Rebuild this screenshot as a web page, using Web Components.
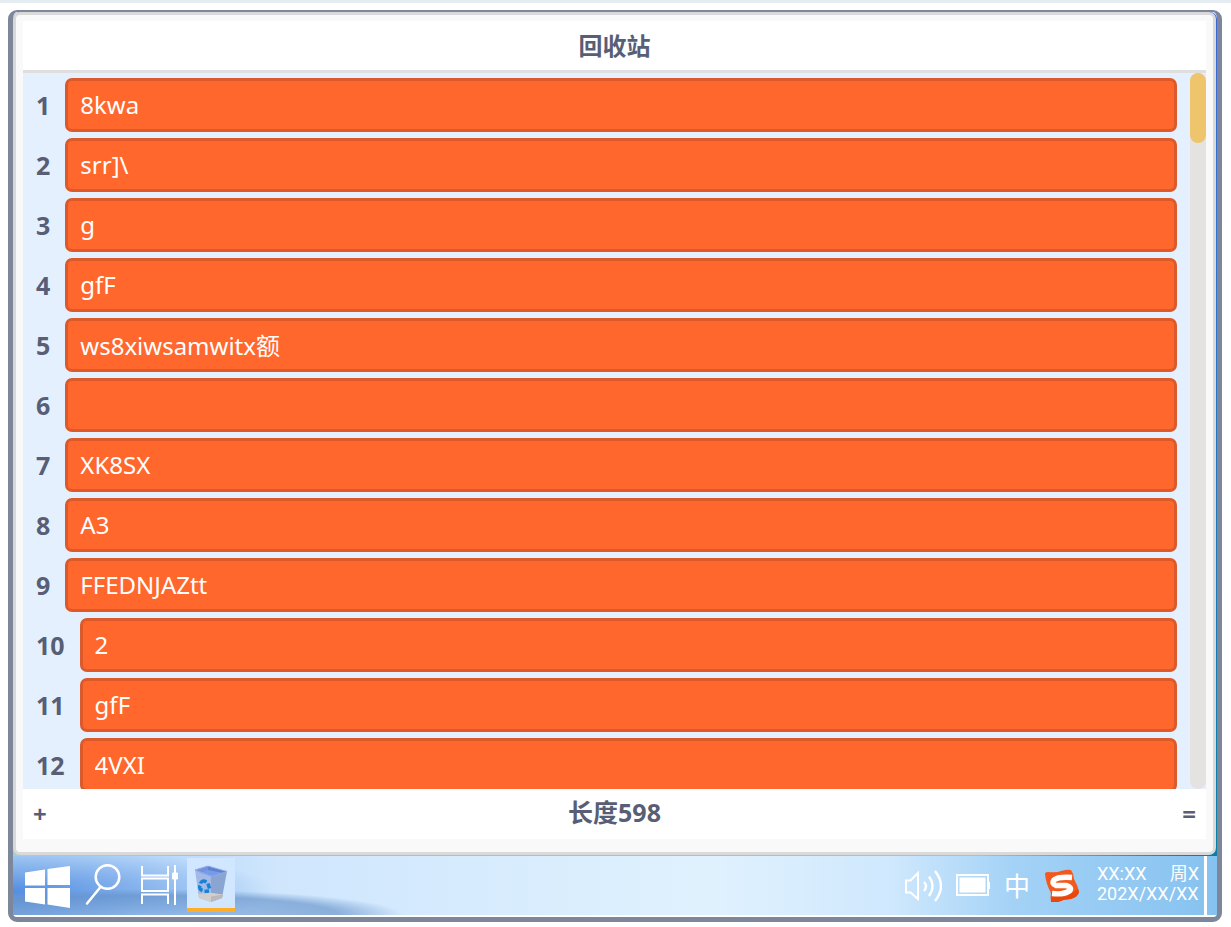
<!DOCTYPE html>
<html lang="zh-CN">
<head>
<meta charset="utf-8">
<meta name="viewport" content="width=device-width, initial-scale=1">
<title>回收站</title>
<style>
    html, body {
        height: 100%;
        margin: 0;
    }

    body {
        background: #fff;
        font-family: "Noto Sans", "Noto Sans CJK SC", sans-serif;
        overflow: hidden;
    }
</style>
</head>
<body>

<desk-stage>
    <list-monitor heading="回收站">
        <list-row index="1" value="8kwa"></list-row>
        <list-row index="2" value="srr]\"></list-row>
        <list-row index="3" value="g"></list-row>
        <list-row index="4" value="gfF"></list-row>
        <list-row index="5" value="ws8xiwsamwitx额"></list-row>
        <list-row index="6" value=""></list-row>
        <list-row index="7" value="XK8SX"></list-row>
        <list-row index="8" value="A3"></list-row>
        <list-row index="9" value="FFEDNJAZtt"></list-row>
        <list-row index="10" value="2"></list-row>
        <list-row index="11" value="gfF"></list-row>
        <list-row index="12" value="4VXI"></list-row>
        <span slot="length">长度598</span>
    </list-monitor>

    <task-bar slot="taskbar">
        <task-button label="开始">
            <svg width="45" height="42" viewBox="0 0 45 42" fill="#fff">
                <path d="M0 6.500L20 3.500V19.500H0zM22.500 3L45 0V19H22.500zM0 22H20V38.500L0 35.500zM22.500 22H45V42L22.500 38.500z"/>
            </svg>
        </task-button>
        <task-button label="搜索">
            <svg width="36" height="42" viewBox="0 2 36 42" overflow="visible" fill="none" stroke="#fff" stroke-width="2.500" stroke-linecap="round">
                <circle cx="22.500" cy="13" r="11.800"/>
                <path d="M15.500 23L2 39.500"/>
            </svg>
        </task-button>
        <task-button label="任务视图">
            <svg width="38" height="42" viewBox="0 2 38 42" overflow="visible" fill="none" stroke="#fff" stroke-width="2">
                <path d="M2 2V11.500H28V2M2 14.500H28V27H2zM2 40V30.500H28V40M35 1V41"/>
                <path d="M32.500 9h5v6h-5z" fill="#fff" stroke-width="1"/>
            </svg>
        </task-button>
        <task-button label="回收站" active>
            <svg width="34" height="38" viewBox="0 0 34 38">
                <path d="M1 5L17 10V37L5 33z" fill="#a3b9e6"/>
                <path d="M33 6.500L17 10V37L28 33z" fill="#8ba5d2"/>
                <path d="M4 29L15 27.500L29 29.500L28 33L17 37L5 33z" fill="#d0cfce"/>
                <path d="M17 31.500V37L28 33L29 29.500z" fill="#bbb9bb"/>
                <path d="M1 5L14 1L33 6.500L18 11.500z" fill="#5d82ce"/>
                <path d="M1 5L14 1V7L7 8z" fill="#7592dc"/>
                <path d="M14 5L29 8L18 11.500L7 8z" fill="#759bea"/>
                <path d="M1 5L14 1L33 6.500L18 11.500z" fill="none" stroke="#92ade9"/>
                <g fill="none" stroke="#1782d4" stroke-width="3.500">
                    <path d="M6.500 18.500Q8 14.500 12.500 17"/>
                    <path d="M14 18.500L15.500 23.500"/>
                    <path d="M6 20.500Q4.500 24 8.500 25.500"/>
                    <path d="M10.500 26.500L15 26"/>
                </g>
            </svg>
        </task-button>

        <svg slot="tray" width="38" height="34" viewBox="0 0 38 34" fill="none" stroke="#fff" stroke-width="2">
            <path d="M2 11.500H6.500L14 4V30L6.500 23.500H2z"/>
            <path d="M20 13Q24 17 20 22M25 7.500Q32 17 25 27M31 2Q43 17 31 32" stroke-width="2.400"/>
        </svg>
        <svg slot="tray" width="34" height="23" viewBox="0 0 34 23">
            <path d="M1 1H32V21H1z" fill="none" stroke="#fff" stroke-width="2"/>
            <path d="M3.500 3.500H29.500V18.500H3.500zM33 8h1.500v7H33z" fill="#fff"/>
        </svg>
        <span slot="tray">中</span>
        <svg slot="tray" width="36" height="34" viewBox="0 0 36 34">
            <path d="M1 5Q1 3 4 3Q13 4 17 2Q24 0 27 1Q30 5 30 10Q34 17 35 23Q34 28 27 30Q20 30 14 33L7 33Q6 28 7 24Q2 15 1 5z" fill="#f4581d"/>
            <path d="M7 24L22 28L34 20L35 23Q34 28 27 30Q20 30 14 33L7 33z" fill="#e9480b"/>
            <path d="M28 8.500Q14 7.500 10 11Q7 14.500 12 16.500L22 16.500Q28 18 26 21.500Q20 26 8 24.500" fill="none" stroke="#fff" stroke-width="5.500"/>
        </svg>
        <tray-clock slot="tray" time="XX:XX" day="周X" date="202X/XX/XX"></tray-clock>
    </task-bar>
</desk-stage>

<script>
class BaseElement extends HTMLElement {
    constructor() {
        super();
        this.root = this.attachShadow({mode: 'open'});
    }

    connectedCallback() {
        this.root.innerHTML = `
            <style>
                * { box-sizing: border-box; }
                ${this.css()}
            </style>
            ${this.render()}
        `;
    }

    /** Read an attribute, safe to put into markup. */
    attr(name) {
        const value = this.getAttribute(name) || '';
        return value.replace(/&/g, '&amp;').replace(/"/g, '&quot;').replace(/</g, '&lt;');
    }

    css() {
        return '';
    }

    render() {
        return '';
    }
}

/** Rounded stage with the desktop wallpaper, a window and the task bar. */
class DeskStage extends BaseElement {
    css() {
        return `
            :host {
                display: flex;
                flex-direction: column;
                box-sizing: border-box;
                height: 100vh;
                padding: 7px 9px 5px 8px;
                border-top: 3px solid #e6edf2;
            }

            main {
                flex: 1;
                min-height: 0;
                display: flex;
                flex-direction: column;
                padding-bottom: 2px;
                border: 5px solid #7e869a;
                border-top-width: 2px;
                border-radius: 9px;
                background: #fff;
            }

            .desktop {
                flex: 1;
                min-height: 0;
                display: flex;
                padding: 0 1px 1px 0;
                border-radius: 7px 7px 0 0;
                background:
                    linear-gradient(90deg, #9fd3c8, #86cfe0 20%, #86cfe0 80%, transparent 98%),
                    linear-gradient(#3b66d6, #2f72d4 25%, #087fa5);
                background-size: calc(100% - 1px) 8px, 100% 100%;
                background-position: left bottom, 0 0;
                background-repeat: no-repeat;
            }
        `;
    }

    render() {
        return `
            <main>
                <div class="desktop"><slot></slot></div>
                <slot name="taskbar"></slot>
            </main>
        `;
    }
}

class ListMonitor extends BaseElement {
    css() {
        return `
            :host {
                flex: 1;
                min-width: 0;
                display: flex;
                flex-direction: column;
                box-sizing: border-box;
                padding: 6px 7px 13px;
                border: 3px solid #d9d9da;
                border-radius: 7px;
                background: #f9f9f9;
                color: #575e75;
                font-size: 24px;
                font-weight: 700;
            }

            header, footer {
                display: flex;
                align-items: center;
                height: 50px;
                background: #fff;
            }

            header {
                height: 52px;
                justify-content: center;
                border-bottom: 3px solid #dededf;
            }

            h1 {
                margin: 0;
                font-size: inherit;
                line-height: 32px;
            }

            .body {
                flex: 1;
                min-height: 0;
                display: flex;
                gap: 13px;
                background: #e5f0ff;
            }

            .rows {
                flex: 1;
                min-width: 0;
                display: flex;
                flex-direction: column;
                gap: 6px;
                padding: 5px 0 0 13px;
                overflow: hidden;
            }

            .track {
                width: 16px;
                border-radius: 8px;
                background: #e4e3e1;
            }

            .thumb {
                height: 70px;
                border-radius: 8px;
                background: #eec46d;
            }

            footer {
                justify-content: space-between;
                padding: 0 10px;
            }

            ::slotted(span) {
                padding-bottom: 5px;
                font-size: 25px;
                line-height: 32px;
            }

            button {
                padding: 0;
                border: 0;
                background: none;
                color: inherit;
                font: inherit;
                line-height: 32px;
            }
        `;
    }

    render() {
        return `
            <header><h1>${this.attr('heading')}</h1></header>
            <div class="body">
                <div class="rows"><slot></slot></div>
                <div class="track"><div class="thumb"></div></div>
            </div>
            <footer>
                <button type="button">+</button>
                <slot name="length"></slot>
                <button type="button">=</button>
            </footer>
        `;
    }
}

class ListRow extends BaseElement {
    css() {
        return `
            :host {
                flex: none;
                display: flex;
                align-items: center;
                gap: 15px;
                height: 54px;
            }

            label {
                padding-bottom: 1px;
                font-size: 25px;
                line-height: 32px;
            }

            input {
                flex: 1;
                min-width: 0;
                height: 100%;
                padding: 0 12px 2px;
                border: 3px solid #db5a2b;
                border-radius: 7px;
                background: #ff672d;
                color: #fff;
                font: inherit;
                font-weight: 400;
                outline: none;
            }
        `;
    }

    render() {
        return `
            <label for="value">${this.attr('index')}</label>
            <input id="value" type="text" value="${this.attr('value')}">
        `;
    }
}

class TaskBar extends BaseElement {
    css() {
        return `
            :host {
                display: flex;
                justify-content: space-between;
                box-sizing: border-box;
                height: 59px;
                padding: 0 10px 0 6px;
                background:
                    radial-gradient(ellipse 260px 26px at 130px 100%, rgba(120, 165, 220, .5), rgba(100, 145, 200, .65) 75%, transparent),
                    radial-gradient(ellipse 260px 45px at 0 60%, #548ee0, transparent),
                    linear-gradient(90deg, #b2d3f7, #bedcfb 14%, #cfe6fd 22%, #d9edfd 45%, #e0f1fe 58%, #cfe8fd 73%, #a4d2f6 83%, #86c2f0 100%);
            }

            nav, .tray {
                display: flex;
                align-items: center;
            }

            nav {
                align-items: flex-start;
                padding-top: 2px;
            }

            .tray {
                gap: 14px;
                color: #fff;
                font-size: 26px;
                line-height: 32px;
            }

            .peek {
                align-self: stretch;
                width: 3px;
                margin-left: -9px;
                padding: 0;
                border: 0;
                background: #fff;
            }
        `;
    }

    render() {
        return `
            <nav><slot></slot></nav>
            <div class="tray">
                <slot name="tray"></slot>
                <button class="peek" type="button" aria-label="显示桌面"></button>
            </div>
        `;
    }
}

class TaskButton extends BaseElement {
    css() {
        return `
            :host { display: block; }

            button {
                display: flex;
                align-items: center;
                justify-content: center;
                width: 56px;
                height: 54px;
                padding: 4px 0 0;
                border: 0;
                background: none;
            }

            :host([active]) button {
                width: 48px;
                padding: 2px 0 0;
                border-bottom: 4px solid #ffac26;
                background: #d1e7ff;
            }
        `;
    }

    render() {
        return `<button type="button" aria-label="${this.attr('label')}"><slot></slot></button>`;
    }
}

class TrayClock extends BaseElement {
    css() {
        return `
            :host {
                display: block;
                width: 102px;
                margin-left: 3px;
                padding-bottom: 3px;
                font-family: Roboto, "Noto Sans CJK SC", sans-serif;
                font-size: 18px;
                line-height: 20px;
            }

            div {
                display: flex;
                justify-content: space-between;
            }
        `;
    }

    render() {
        return `
            <div><span>${this.attr('time')}</span><span>${this.attr('day')}</span></div>
            <div>${this.attr('date')}</div>
        `;
    }
}

customElements.define('desk-stage', DeskStage);
customElements.define('list-monitor', ListMonitor);
customElements.define('list-row', ListRow);
customElements.define('task-bar', TaskBar);
customElements.define('task-button', TaskButton);
customElements.define('tray-clock', TrayClock);
</script>
</body>
</html>
